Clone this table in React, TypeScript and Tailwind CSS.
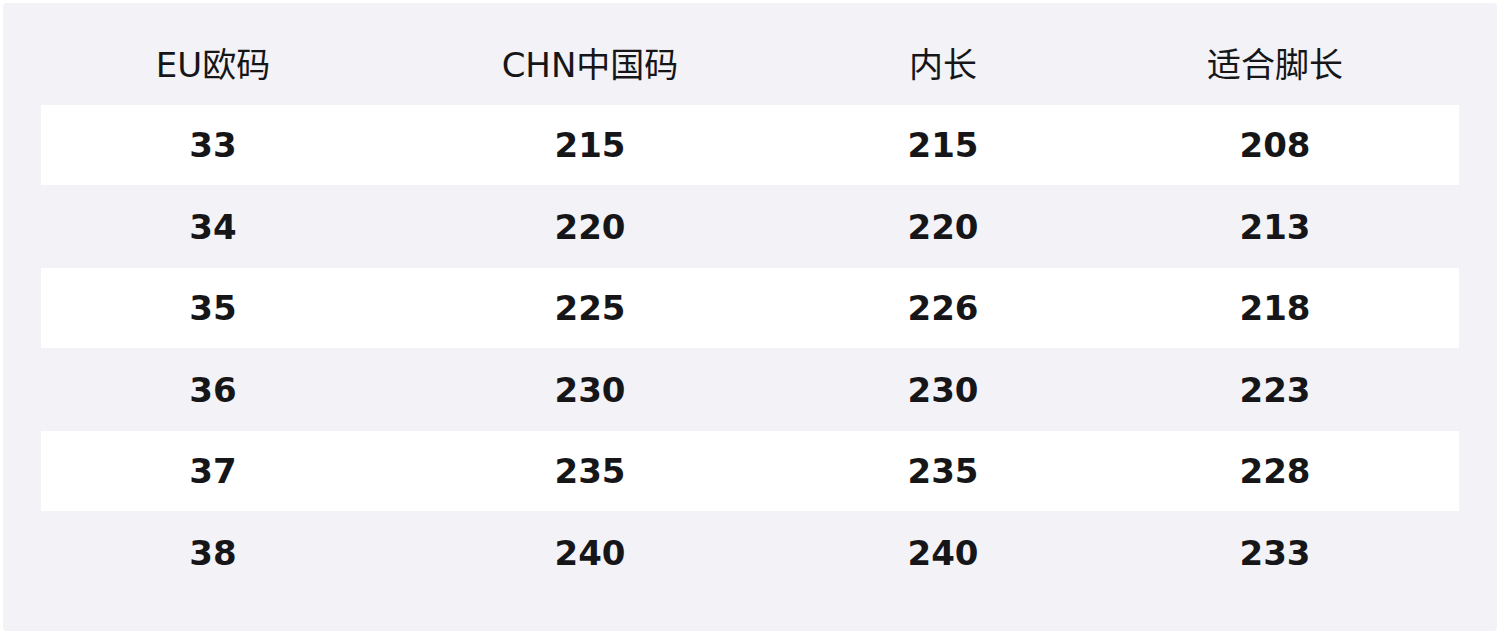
import React from 'react';

const rows = [
  ['33', '215', '215', '208'],
  ['34', '220', '220', '213'],
  ['35', '225', '226', '218'],
  ['36', '230', '230', '223'],
  ['37', '235', '235', '228'],
  ['38', '240', '240', '233'],
];

const headers = ['EU欧码', 'CHN中国码', '内长', '适合脚长'];

const cols = 'grid grid-cols-[344px_410px_296px_368px]';

export default function App() {
  return (
    <div className="w-[1500px] h-[635px] bg-white p-[3px]" style={{ fontFamily: '"DejaVu Sans", "Noto Sans CJK SC", sans-serif' }}>
      <div className="h-[628px] bg-[#f2f2f7] rounded-sm px-[38px] pt-[21px] text-[#161618]">
        {/* header */}
        <div className={`${cols} h-[81px] items-center text-[34px] font-normal`}>
          {headers.map((h) => (
            <div key={h} className="text-center leading-none">{h}</div>
          ))}
        </div>

        {/* size rows */}
        {rows.map((r, i) => (
          <div
            key={r[0]}
            className={`${cols} ${i % 2 === 0 ? 'bg-white h-[80px]' : 'h-[83px]'} items-center text-[34px] font-bold`}
          >
            {r.map((v, j) => (
              <div key={j} className="text-center leading-none">{v}</div>
            ))}
          </div>
        ))}
      </div>
    </div>
  );
}
